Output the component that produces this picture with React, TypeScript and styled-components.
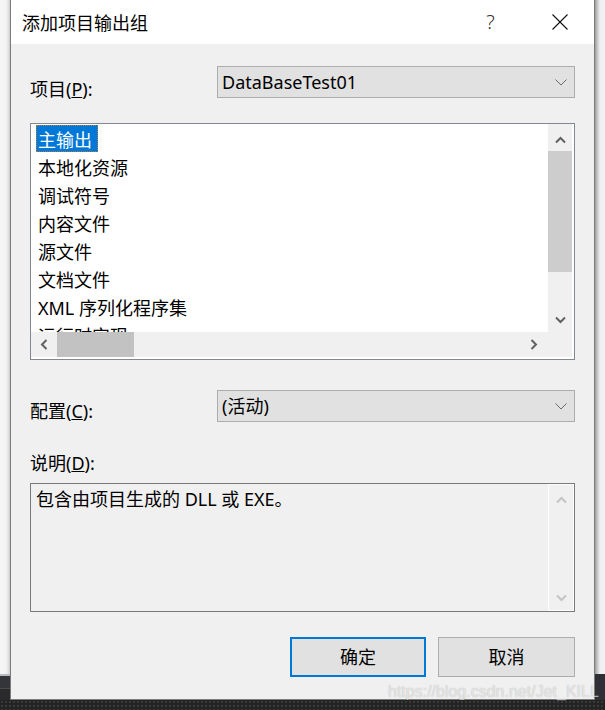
import React from "react";
import styled, { createGlobalStyle } from "styled-components";

const GlobalStyle = createGlobalStyle`
  html, body { margin: 0; padding: 0; background: #f0f0f0; }
  body { font-family: "Noto Sans", "Noto Sans CJK SC", sans-serif; }
  * { box-sizing: border-box; }
`;

const FONT = `"Noto Sans", "Noto Sans CJK SC", sans-serif`;

const Screen = styled.div`
  position: relative;
  width: 605px;
  height: 710px;
  display: flex;
  flex-direction: column;
  overflow: hidden;
  font-family: ${FONT};
  color: #000;
`;

const Stage = styled.div`
  display: flex;
  height: 700px;
`;

const Edge = styled.div<{ $side: "left" | "right" }>`
  width: 10px;
  flex: none;
  background: ${(p) =>
    p.$side === "left"
      ? `linear-gradient(to bottom, transparent 0 674px, #b4b9c2 674px 676px, #34353a 676px 688px, #4a4b50 688px 689px, #2a2a2c 689px),
         linear-gradient(to right, #f6f6f6 0, #f2f2f2 6px, #dcdcdc 9px, #c8c8c8 10px)`
      : `linear-gradient(to bottom, transparent 0 674px, #2f3035 674px),
         linear-gradient(to right, #9c9c9c 0, #d2d2d2 3px, #eceef2 5px, #f3f3f3 10px)`};
`;

const BottomStrip = styled.div`
  height: 10px;
  background-color: #232323;
  background-image: radial-gradient(#3a3a3a 0.8px, transparent 1.2px);
  background-size: 4px 4px;
`;

const Dialog = styled.div`
  width: 585px;
  flex: none;
  display: flex;
  flex-direction: column;
  background: #f0f0f0;
  border: 1px solid #7b7b7b;
  border-top: none;
`;

const TitleBar = styled.div`
  height: 44px;
  display: flex;
  align-items: center;
  background: #ffffff;
`;

const Title = styled.div`
  flex: 1;
  padding-left: 11px;
  font-size: 18px;
  line-height: 26px;
  font-family: "Noto Sans CJK SC", sans-serif;
`;

const CaptionButton = styled.div`
  width: 69px;
  height: 44px;
  display: flex;
  align-items: center;
  justify-content: center;
  font-size: 20px;
  line-height: 26px;
  color: #333;
  font-family: "Noto Sans", sans-serif;
  font-weight: 300;
`;

const Body = styled.div`
  display: flex;
  flex-direction: column;
  padding: 22px 19px 22px 19px;
`;

const FieldRow = styled.div<{ $mt?: number }>`
  display: flex;
  height: 32px;
  margin-top: ${(p) => p.$mt ?? 0}px;
`;

const FieldLabel = styled.div<{ $pt: number }>`
  width: 187px;
  flex: none;
  padding-top: ${(p) => p.$pt}px;
  font-size: 18px;
  line-height: 18px;
  white-space: nowrap;
`;

const Select = styled.div`
  flex: 1;
  height: 32px;
  display: flex;
  align-items: center;
  padding-left: 4px;
  background: #e1e1e1;
  border: 1px solid #adadad;
  font-size: 18px;
  line-height: 26px;
`;

const SelectValue = styled.span`
  flex: 1;
  white-space: nowrap;
`;

const SelectArrow = styled.svg`
  margin-right: 7px;
  flex: none;
`;

const ListBox = styled.div`
  margin-top: 25px;
  height: 237px;
  border: 1px solid #828790;
  background: #ffffff;
  display: grid;
  grid-template-columns: 1fr 24px;
  grid-template-rows: 208px 25px;
  padding: 0 2px 2px 0;
`;

const ListViewport = styled.div`
  overflow: hidden;
`;

const ListItem = styled.div`
  height: 28px;
  display: flex;
  align-items: flex-start;
  padding-left: 5px;
  font-size: 18px;
  white-space: nowrap;
`;

const ItemText = styled.span<{ $selected?: boolean }>`
  display: inline-block;
  height: 27px;
  margin-top: 1px;
  line-height: 30px;
  padding: 0 6px 0 2px;
  background: ${(p) => (p.$selected ? "#0078d7" : "transparent")};
  color: ${(p) => (p.$selected ? "#ffffff" : "#000000")};
  outline: ${(p) => (p.$selected ? "1px dotted #b07a3a" : "none")};
  outline-offset: -1px;
`;

const VScroll = styled.div`
  background: #f0f0f0;
  display: flex;
  flex-direction: column;
`;

const ScrollButton = styled.div<{ $h: number; $pt?: number; $pr?: number; $w?: number }>`
  height: ${(p) => p.$h}px;
  width: ${(p) => (p.$w ? `${p.$w}px` : "auto")};
  flex: none;
  display: flex;
  align-items: center;
  justify-content: center;
  padding-top: ${(p) => p.$pt ?? 0}px;
  padding-right: ${(p) => p.$pr ?? 0}px;
`;

const VTrack = styled.div`
  flex: 1;
  display: flex;
  flex-direction: column;
`;

const VThumb = styled.div`
  height: 121px;
  background: #cdcdcd;
`;

const HScroll = styled.div`
  background: #f0f0f0;
  display: flex;
  align-items: stretch;
`;

const HTrack = styled.div`
  flex: 1;
  display: flex;
`;

const HThumb = styled.div`
  width: 77px;
  background: #c2c2c2;
`;

const Corner = styled.div`
  background: #f0f0f0;
`;

const SectionLabel = styled.div`
  margin-top: 28px;
  font-size: 18px;
  line-height: 26px;
`;

const DescBox = styled.div`
  margin-top: 7px;
  height: 129px;
  border: 1px solid #7a7a7a;
  background: #f0f0f0;
  display: flex;
`;

const DescText = styled.div`
  flex: 1;
  padding: 1px 0 0 5px;
  font-size: 18px;
  line-height: 28px;
`;

const DescScroll = styled.div`
  width: 26px;
  flex: none;
  border: 1px solid #fdfdfd;
  display: flex;
  flex-direction: column;
  justify-content: space-between;
`;

const ButtonRow = styled.div`
  margin-top: 25px;
  display: flex;
  justify-content: flex-end;
  gap: 12px;
`;

const DialogButton = styled.div<{ $primary?: boolean; $w: number }>`
  width: ${(p) => p.$w}px;
  height: 40px;
  display: flex;
  align-items: center;
  justify-content: center;
  background: #e1e1e1;
  border: ${(p) => (p.$primary ? "2px solid #0078d7" : "1px solid #adadad")};
  font-size: 18px;
  line-height: 26px;
`;

const Watermark = styled.div`
  position: absolute;
  left: 388px;
  top: 682px;
  font-family: "Liberation Sans", Arial, sans-serif;
  font-size: 16px;
  line-height: 19px;
  white-space: nowrap;
  color: rgba(255, 255, 255, 0.65);
  text-shadow: 0 0 1px rgba(0, 0, 0, 0.3);
  pointer-events: none;
`;

type Dir = "up" | "down" | "left" | "right";
const rot: Record<Dir, number> = { up: 0, down: 180, left: -90, right: 90 };

const Chevron: React.FC<{ dir: Dir; color: string }> = ({ dir, color }) => (
  <svg width="11" height="11" viewBox="0 0 11 11" style={{ transform: `rotate(${rot[dir]}deg)` }}>
    <polyline points="1,7.5 5.5,3 10,7.5" fill="none" stroke={color} strokeWidth="2" />
  </svg>
);

const DropArrow = () => (
  <SelectArrow width="12" height="7" viewBox="0 0 12 7">
    <polyline points="0.5,0.5 6,6 11.5,0.5" fill="none" stroke="#6a6a6a" strokeWidth="1" />
  </SelectArrow>
);

const CloseIcon = () => (
  <svg width="16" height="16" viewBox="0 0 16 16">
    <line x1="0.5" y1="0.5" x2="15.5" y2="15.5" stroke="#111" strokeWidth="1.1" />
    <line x1="15.5" y1="0.5" x2="0.5" y2="15.5" stroke="#111" strokeWidth="1.1" />
  </svg>
);

const items = ["主输出", "本地化资源", "调试符号", "内容文件", "源文件", "文档文件", "XML 序列化程序集", "运行时实现"];

export default function App() {
  return (
    <>
      <GlobalStyle />
      <Screen>
        <Stage>
          <Edge $side="left" />
          <Dialog>
            <TitleBar>
              <Title>添加项目输出组</Title>
              <CaptionButton>?</CaptionButton>
              <CaptionButton>
                <CloseIcon />
              </CaptionButton>
            </TitleBar>
            <Body>
              <FieldRow>
                <FieldLabel $pt={14}>
                  项目(<u>P</u>):
                </FieldLabel>
                <Select>
                  <SelectValue>DataBaseTest01</SelectValue>
                  <DropArrow />
                </Select>
              </FieldRow>

              <ListBox>
                <ListViewport>
                  {items.map((t, i) => (
                    <ListItem key={t}>
                      <ItemText $selected={i === 0}>{t}</ItemText>
                    </ListItem>
                  ))}
                </ListViewport>
                <VScroll>
                  <ScrollButton $h={27} $pt={5}>
                    <Chevron dir="up" color="#606060" />
                  </ScrollButton>
                  <VTrack>
                    <VThumb />
                  </VTrack>
                  <ScrollButton $h={26}>
                    <Chevron dir="down" color="#606060" />
                  </ScrollButton>
                </VScroll>
                <HScroll>
                  <ScrollButton $h={25} $w={26}>
                    <Chevron dir="left" color="#606060" />
                  </ScrollButton>
                  <HTrack>
                    <HThumb />
                  </HTrack>
                  <ScrollButton $h={25} $w={26} $pr={3}>
                    <Chevron dir="right" color="#606060" />
                  </ScrollButton>
                </HScroll>
                <Corner />
              </ListBox>

              <FieldRow $mt={30}>
                <FieldLabel $pt={12}>
                  配置(<u>C</u>):
                </FieldLabel>
                <Select>
                  <SelectValue>(活动)</SelectValue>
                  <DropArrow />
                </Select>
              </FieldRow>

              <SectionLabel>
                说明(<u>D</u>):
              </SectionLabel>
              <DescBox>
                <DescText>包含由项目生成的 DLL 或 EXE。</DescText>
                <DescScroll>
                  <ScrollButton $h={30}>
                    <Chevron dir="up" color="#c4c4c4" />
                  </ScrollButton>
                  <ScrollButton $h={26}>
                    <Chevron dir="down" color="#c4c4c4" />
                  </ScrollButton>
                </DescScroll>
              </DescBox>

              <ButtonRow>
                <DialogButton $primary $w={136}>确定</DialogButton>
                <DialogButton $w={137}>取消</DialogButton>
              </ButtonRow>
            </Body>
          </Dialog>
          <Edge $side="right" />
        </Stage>
        <BottomStrip />
        <Watermark>https://blog.csdn.net/Jet_KILL</Watermark>
      </Screen>
    </>
  );
}
